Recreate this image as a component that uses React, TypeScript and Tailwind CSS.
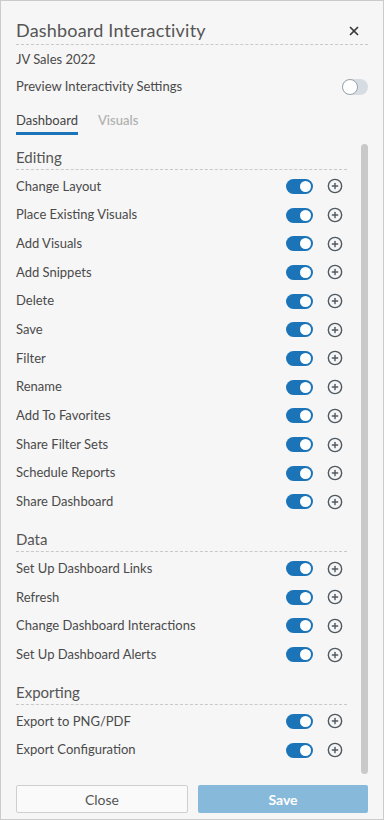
import { X, CirclePlus } from "lucide-react";

type Section = { title: string; items: string[] };

const sections: Section[] = [
  {
    title: "Editing",
    items: [
      "Change Layout",
      "Place Existing Visuals",
      "Add Visuals",
      "Add Snippets",
      "Delete",
      "Save",
      "Filter",
      "Rename",
      "Add To Favorites",
      "Share Filter Sets",
      "Schedule Reports",
      "Share Dashboard",
    ],
  },
  {
    title: "Data",
    items: [
      "Set Up Dashboard Links",
      "Refresh",
      "Change Dashboard Interactions",
      "Set Up Dashboard Alerts",
    ],
  },
  {
    title: "Exporting",
    items: ["Export to PNG/PDF", "Export Configuration"],
  },
];

function Toggle({ on }: { on: boolean }) {
  if (on) {
    return (
      <div className="flex h-[15px] w-[27px] items-center justify-end rounded-full bg-[#1b74b8] pr-[2px]">
        <div className="h-[11px] w-[11px] rounded-full bg-white" />
      </div>
    );
  }
  return (
    <div className="flex h-[16px] w-[26px] items-center rounded-full bg-[#d6dce2]">
      <div className="h-[16px] w-[16px] rounded-full border border-[#9aa3ab] bg-white" />
    </div>
  );
}

export default function App() {
  return (
    <div
      className="flex h-[820px] w-[384px] flex-col border border-[#cbcbcb] bg-[#f6f6f6] px-[15px] text-[#4a4a4a]"
      style={{ fontFamily: "Lato, 'Noto Sans', sans-serif" }}
    >
      {/* header */}
      <div className="flex h-[44px] items-center border-b border-dashed border-[#c9c9c9] pt-[16px]">
        <span className="text-[18px] tracking-[0.2px] text-[#555]">Dashboard Interactivity</span>
        <X className="ml-auto mr-[7px] h-[14px] w-[14px] text-[#3a3a3a]" strokeWidth={3} />
      </div>
      <div className="flex h-[30px] items-center text-[13px]">JV Sales 2022</div>
      <div className="flex h-[24px] items-center text-[13px]">
        <span>Preview Interactivity Settings</span>
        <div className="ml-auto">
          <Toggle on={false} />
        </div>
      </div>
      <div className="flex gap-5 pt-[12px] text-[13px]">
        <div className="border-b-[3px] border-[#1b74b8] pb-[3px] leading-[18px] text-[#444]">Dashboard</div>
        <div className="pb-[3px] leading-[18px] font-semibold text-[#b3b3b3]">Visuals</div>
      </div>

      {/* body */}
      <div className="mt-[9px] flex flex-1 gap-[14px]">
        <div className="flex-1">
          {sections.map((s, i) => (
            <div key={s.title} className={i > 0 ? "mt-[10px]" : ""}>
              <div className="mb-[2px] border-b border-dashed border-[#c9c9c9] pb-[2px] pt-[3px] text-[15px] leading-[20px] text-[#555]">
                {s.title}
              </div>
              {s.items.map((item) => (
                <div key={item} className="flex h-[28.7px] items-center pr-[4px] text-[13px]">
                  <span>{item}</span>
                  <div className="ml-auto mr-[14px]">
                    <Toggle on={true} />
                  </div>
                  <CirclePlus className="h-[16px] w-[16px] text-[#4f5962]" strokeWidth={2.1} />
                </div>
              ))}
            </div>
          ))}
        </div>
        <div className="mb-[2px] w-[7px] rounded-full bg-[#c9c9c9]" />
      </div>

      {/* footer */}
      <div className="flex gap-[10px] pb-[6px] pt-[9px] text-[14px]">
        <button className="h-[28px] flex-1 rounded-[2px] border border-[#cfcfcf] bg-[#fafafa] text-[#555]">
          Close
        </button>
        <button className="h-[28px] flex-1 rounded-[2px] bg-[#86b9da] font-bold text-white">Save</button>
      </div>
    </div>
  );
}
